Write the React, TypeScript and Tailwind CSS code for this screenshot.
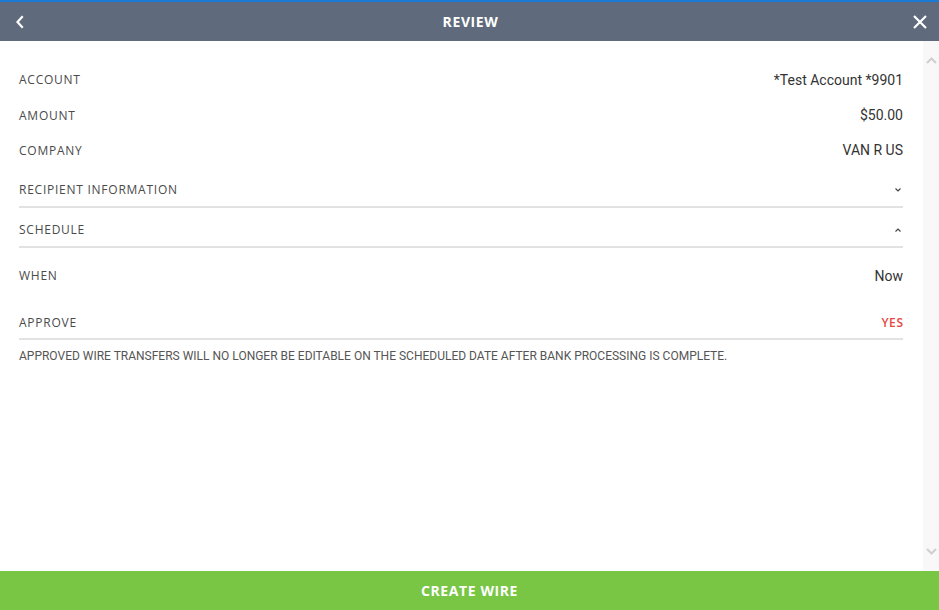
import React from "react";

const label = "font-['Open_Sans',sans-serif] text-[12px] font-medium text-[#4a4a4a] tracking-[0.75px]";
const value = "font-['Roboto',sans-serif] text-[14px] text-[#333]";

function ChevronDownSmall() {
  return (
    <svg width="8" height="6" viewBox="0 0 8 6" fill="none">
      <path d="M1.5 1.5 L4 4 L6.5 1.5" stroke="#444" strokeWidth="1.2" />
    </svg>
  );
}
function ChevronUpSmall() {
  return (
    <svg width="8" height="6" viewBox="0 0 8 6" fill="none">
      <path d="M1.5 4.5 L4 2 L6.5 4.5" stroke="#444" strokeWidth="1.2" />
    </svg>
  );
}

export default function App() {
  return (
    <div className="w-full h-[610px] flex flex-col bg-white overflow-hidden">
      <header className="h-[41px] shrink-0 border-t-2 border-[#1a7ad6] bg-[#5f6b7c] flex items-center justify-between pl-[14px] pr-[10px]">
        <svg width="12" height="14" viewBox="0 0 12 14" fill="none">
          <path d="M8 2 L3.5 7 L8 12" stroke="#fff" strokeWidth="2.2" strokeLinecap="square" />
        </svg>
        <div className="font-['Open_Sans',sans-serif] text-[14px] font-bold text-white tracking-[0.6px] pl-[4px]">REVIEW</div>
        <svg width="18" height="18" viewBox="0 0 18 18" fill="none">
          <path d="M3 3 L15 15 M15 3 L3 15" stroke="#fff" strokeWidth="2.2" />
        </svg>
      </header>

      <div className="flex-1 flex min-h-0">
        <main className="flex-1 pl-[19px] pr-[20px] pt-[21px]">
          <div className="h-[36px] flex items-center justify-between">
            <span className={label}>ACCOUNT</span>
            <span className={value}>*Test Account *9901</span>
          </div>
          <div className="h-[35px] flex items-center justify-between">
            <span className={label}>AMOUNT</span>
            <span className={value}>$50.00</span>
          </div>
          <div className="h-[35px] flex items-center justify-between">
            <span className={label}>COMPANY</span>
            <span className={value}>VAN R US</span>
          </div>

          <div className="h-[38px] pt-[6px] flex items-center justify-between">
            <span className={label + " text-[#2a2a2a]"}>RECIPIENT INFORMATION</span>
            <span className="pr-[1px] flex items-center"><ChevronDownSmall /></span>
          </div>
          <div className="h-[2px] bg-[#e2e2e2]" />

          <div className="h-[38px] pt-[6px] flex items-center justify-between">
            <span className={label + " text-[#2a2a2a]"}>SCHEDULE</span>
            <span className="pr-[1px] flex items-center"><ChevronUpSmall /></span>
          </div>
          <div className="h-[2px] bg-[#e2e2e2]" />

          <div className="h-[56px] flex items-center justify-between">
            <span className={label}>WHEN</span>
            <span className={value}>Now</span>
          </div>

          <div className="h-[34px] pt-[4px] flex items-center justify-between">
            <span className={label + " text-[#2a2a2a]"}>APPROVE</span>
            <span className="font-['Open_Sans',sans-serif] text-[12px] font-semibold text-[#e8483f] tracking-[0.6px] -mr-[0.6px]">YES</span>
          </div>
          <div className="h-[2px] bg-[#e2e2e2]" />

          <p className="pt-[10px] font-['Roboto',sans-serif] text-[12px] leading-[12px] text-[#555]">
            APPROVED WIRE TRANSFERS WILL NO LONGER BE EDITABLE ON THE SCHEDULED DATE AFTER BANK PROCESSING IS COMPLETE.
          </p>
        </main>

        <aside className="w-[16px] shrink-0 bg-[#f8f8f8] flex flex-col items-center justify-between pt-[16px] pb-[16px]">
          <svg width="11" height="7" viewBox="0 0 11 7" fill="none">
            <path d="M1 6 L5.5 1.5 L10 6" stroke="#cfcfcf" strokeWidth="2" />
          </svg>
          <svg width="11" height="7" viewBox="0 0 11 7" fill="none">
            <path d="M1 1 L5.5 5.5 L10 1" stroke="#cfcfcf" strokeWidth="2" />
          </svg>
        </aside>
      </div>

      <footer className="h-[39px] shrink-0 bg-[#78c644] flex items-center justify-center">
        <span className="font-['Open_Sans',sans-serif] text-[14px] font-bold text-white tracking-[0.6px]">CREATE WIRE</span>
      </footer>
    </div>
  );
}
